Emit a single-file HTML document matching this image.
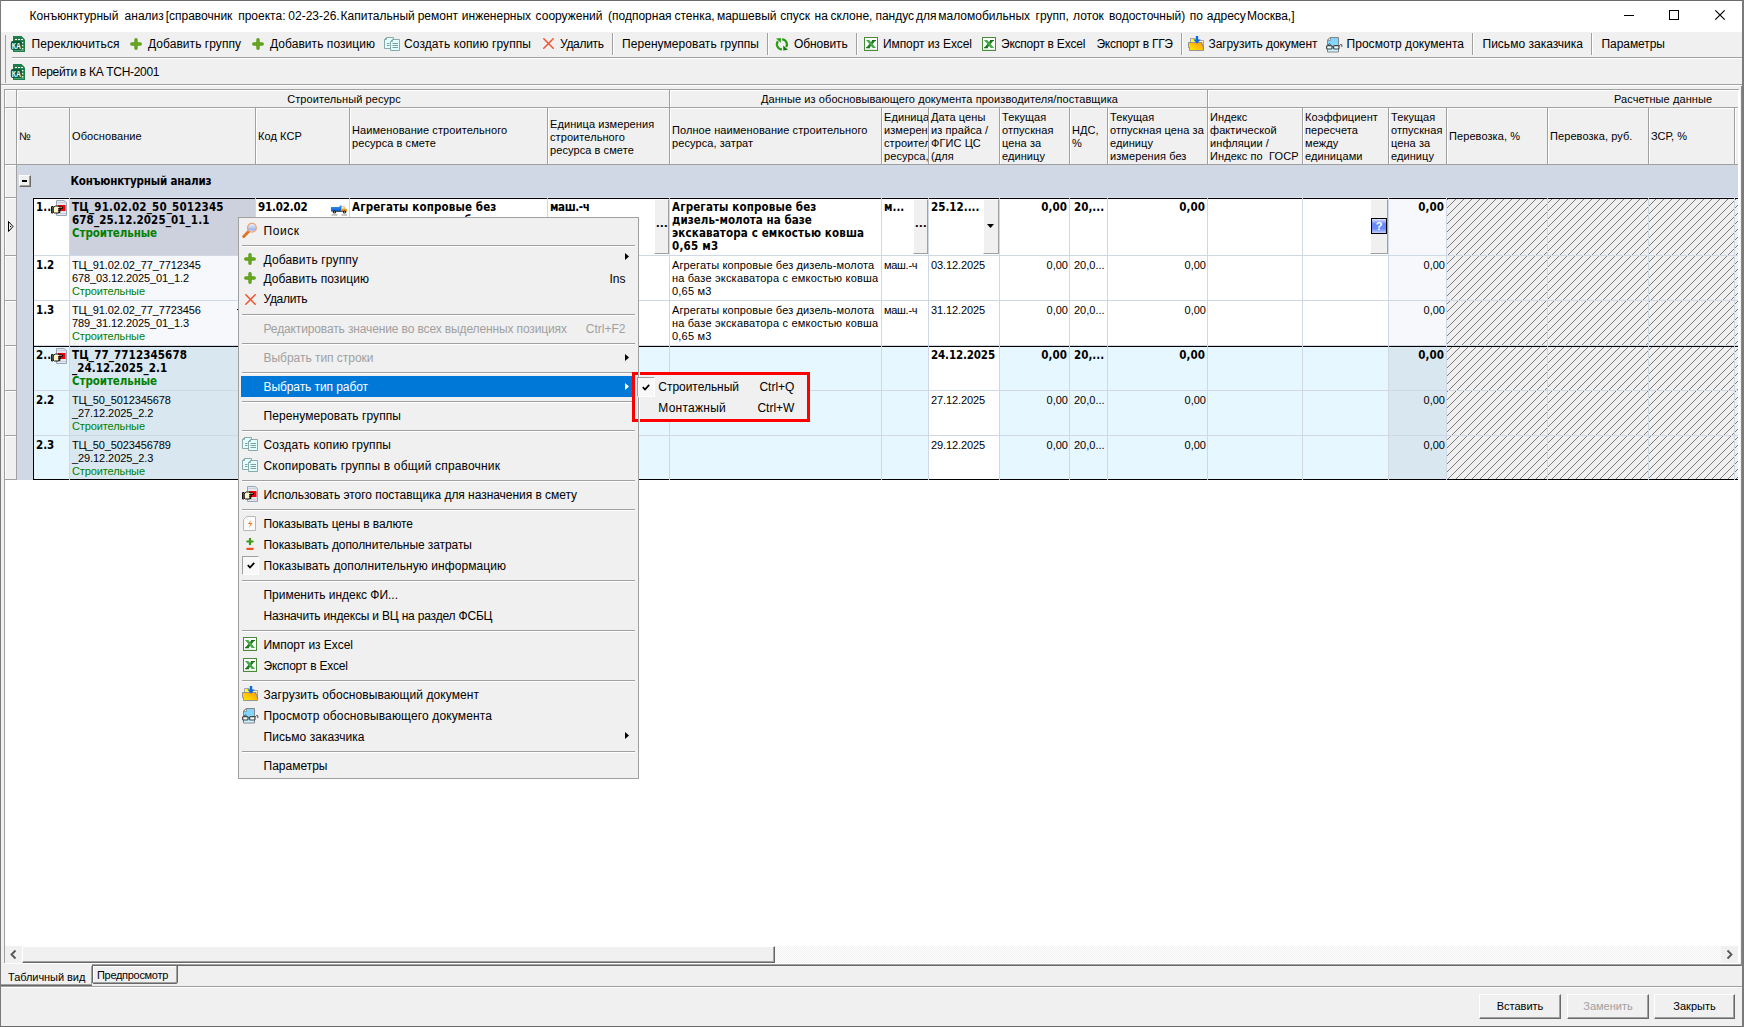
<!DOCTYPE html><html lang="ru"><head><meta charset="utf-8"><title>Конъюнктурный анализ</title><style>
*{box-sizing:border-box;margin:0;padding:0}
html,body{width:1744px;height:1027px;overflow:hidden;background:#f0f0f0}
body{position:relative;font-family:"Liberation Sans",sans-serif;font-size:11px;color:#000}
div,span.t,svg.i{position:absolute}
.t{white-space:nowrap;line-height:20px;margin-top:-14px}
.u{font-size:12px}           /* Segoe UI replacement */
.g{color:#a0a0a0}
.th{font-size:11px}
.hc{background:#f0f0f0;border-right:1px solid #a0a0a0;border-bottom:1px solid #a0a0a0;box-shadow:inset 1px 1px 0 #fff;overflow:hidden;font-size:11px;line-height:13px;display:flex;align-items:center;padding-left:2px;white-space:nowrap;letter-spacing:0.080px}
.c{border-right:1px solid #d0d7e5;border-bottom:1px solid #d0d7e5;overflow:hidden;font-size:11px;line-height:13px;padding:3px 0 0 2px;white-space:nowrap}
.b{font-weight:bold;font-family:"DejaVu Sans Condensed","Liberation Sans",sans-serif;font-size:11.5px}
.r{text-align:right;padding-right:1px}
.r.b{padding-right:2px}
.gr{color:#008000}
.btn{background:#f0f0f0;border:1px solid;border-color:#fff #696969 #696969 #fff;box-shadow:inset -1px -1px 0 #a0a0a0;text-align:center;font-size:11px}
.sep{background:#a0a0a0;width:1px;height:22px;box-shadow:1px 0 0 #fff}
.ms{background:#a0a0a0;height:1px;border:0}
</style></head><body>
<div style="left:0px;top:0px;width:1744px;height:32px;background:#fff"></div>
<span id="t1" class="t u" style="left:29.5px;top:20px;white-space:pre;">Конъюнктурный </span>
<span id="t2" class="t u" style="left:124.6px;top:20px;white-space:pre;">анализ </span>
<span id="t3" class="t u" style="left:165.7px;top:20px;white-space:pre;">[справочник </span>
<span id="t4" class="t u" style="left:238.2px;top:20px;white-space:pre;">проекта: </span>
<span id="t5" class="t u" style="left:288.3px;top:20px;white-space:pre;">02-23-26. </span>
<span id="t6" class="t u" style="left:340.6px;top:20px;white-space:pre;">Капитальный </span>
<span id="t7" class="t u" style="left:417.7px;top:20px;white-space:pre;">ремонт </span>
<span id="t8" class="t u" style="left:461.8px;top:20px;white-space:pre;">инженерных </span>
<span id="t9" class="t u" style="left:535.6px;top:20px;white-space:pre;">сооружений </span>
<span id="t10" class="t u" style="left:608px;top:20px;white-space:pre;">(подпорная </span>
<span id="t11" class="t u" style="left:674.5px;top:20px;white-space:pre;">стенка, </span>
<span id="t12" class="t u" style="left:716.9px;top:20px;white-space:pre;">маршевый </span>
<span id="t13" class="t u" style="left:780.3px;top:20px;white-space:pre;">спуск </span>
<span id="t14" class="t u" style="left:814.5px;top:20px;white-space:pre;">на </span>
<span id="t15" class="t u" style="left:830.6px;top:20px;white-space:pre;">склоне, </span>
<span id="t16" class="t u" style="left:875.4px;top:20px;white-space:pre;">пандус </span>
<span id="t17" class="t u" style="left:916.1px;top:20px;white-space:pre;">для </span>
<span id="t18" class="t u" style="left:938.3px;top:20px;white-space:pre;">маломобильных </span>
<span id="t19" class="t u" style="left:1035.5px;top:20px;white-space:pre;">групп, </span>
<span id="t20" class="t u" style="left:1073px;top:20px;white-space:pre;">лоток </span>
<span id="t21" class="t u" style="left:1109px;top:20px;white-space:pre;">водосточный) </span>
<span id="t22" class="t u" style="left:1189.8px;top:20px;white-space:pre;">по </span>
<span id="t23" class="t u" style="left:1206.8px;top:20px;white-space:pre;">адресу </span>
<span id="t24" class="t u" style="left:1246.9px;top:20px;white-space:pre;">Москва,]</span>
<svg class="i" style="left:1600px;top:1px" width="140" height="30" viewBox="0 0 140 30"><path d="M24 14.500h10" stroke="#000" fill="none"/><rect x="69.500" y="9.500" width="9" height="9" stroke="#000" fill="none"/><path d="M115.300 9.300l9.400 9.400M124.700 9.300l-9.400 9.400" stroke="#000" stroke-width="1.200" fill="none"/></svg>
<div style="left:0px;top:32px;width:1744px;height:53px;background:#f0f0f0"></div>
<div style="left:5px;top:35px;width:1px;height:48px;background:#a0a0a0"></div>
<div style="left:12px;top:57px;width:1730px;height:1px;background:#a0a0a0"></div>
<div style="left:12px;top:58px;width:1730px;height:1px;background:#fff"></div>
<div style="left:1px;top:84px;width:1741px;height:1px;background:#a0a0a0"></div>
<div style="left:1px;top:85px;width:1741px;height:1px;background:#fff"></div>
<svg class="i" style="left:10px;top:36px" width="15" height="16" viewBox="0 0 15 16"><path d="M3 0h8.500l3.500 3.500v12.500h-12z" fill="#1f7d49"/><path d="M4 13.500h10v1.500h-10z" fill="#4fa373"/><rect x="0.800" y="5" width="10.700" height="9" rx="2" fill="#0d5c31"/><path d="M5 3.500h2M8 3.500h2M11 3.500h2" stroke="#fff"/><path d="M12 6h1.300v1.300h-1.300zM12 9h1.300v1.300h-1.300zM12 12h1.300v1.300h-1.300z" fill="#fff"/><text x="1.800" y="12.800" font-family="Liberation Sans, sans-serif" font-size="8.500" font-weight="bold" fill="#fff" textLength="9.200" lengthAdjust="spacingAndGlyphs">КА</text></svg>
<span id="t25" class="t u" style="left:31.5px;top:48px;letter-spacing:0.085px;">Переключиться</span>
<svg class="i" style="left:130px;top:38px" width="12" height="12" viewBox="0 0 12 12"><path d="M6 1.800v8.400M1.800 6h8.400" stroke="#5b9a17" stroke-width="3.400" stroke-linecap="round"/><path d="M6 2v8M2 6h8" stroke="#6aa822" stroke-width="1.600" stroke-linecap="round"/></svg>
<span id="t26" class="t u" style="left:148px;top:48px;letter-spacing:0.051px;">Добавить группу</span>
<svg class="i" style="left:252px;top:38px" width="12" height="12" viewBox="0 0 12 12"><path d="M6 1.800v8.400M1.800 6h8.400" stroke="#5b9a17" stroke-width="3.400" stroke-linecap="round"/><path d="M6 2v8M2 6h8" stroke="#6aa822" stroke-width="1.600" stroke-linecap="round"/></svg>
<span id="t27" class="t u" style="left:270px;top:48px;letter-spacing:0.054px;">Добавить позицию</span>
<svg class="i" style="left:384px;top:37px" width="16" height="14" viewBox="0 0 16 14"><path d="M2.500 0.500h7v11h-9v-9z" fill="#e0ffff" stroke="#8aa9a9"/><path d="M0.500 2.500h2v-2" fill="none" stroke="#8aa9a9"/><path d="M8.500 2.500h7v11h-9v-9z" fill="#e0ffff" stroke="#8aa9a9"/><path d="M6.500 4.500h2v-2" fill="none" stroke="#8aa9a9"/><path d="M3 6.500h2.500M3 8.500h2.500M8.500 6.500h5.500M8.500 8.500h5.500M8.500 10.500h5.500" stroke="#7d9e9e"/></svg>
<span id="t28" class="t u" style="left:404px;top:48px;letter-spacing:0.101px;">Создать копию группы</span>
<svg class="i" style="left:543px;top:38px" width="11" height="11" viewBox="0 0 11 11"><path d="M0.800 0.800l9.400 9.400M10.200 0.800l-9.400 9.400" stroke="#f0532b" stroke-width="1.500" stroke-linecap="round"/></svg>
<span id="t29" class="t u" style="left:560px;top:48px;letter-spacing:-0.305px;">Удалить</span>
<div class="sep" style="left:612px;top:33px;width:1px;height:22px;"></div>
<span id="t30" class="t u" style="left:622px;top:48px;letter-spacing:0.066px;">Перенумеровать группы</span>
<div class="sep" style="left:767px;top:33px;width:1px;height:22px;"></div>
<svg class="i" style="left:775px;top:37.5px" width="14" height="13" viewBox="0 0 14 13"><path d="M7 11.300A5 5 0 0 1 3 3.200" fill="none" stroke="#2c9e14" stroke-width="2.200"/><path d="M1 0.600l5-0.600-0.200 4.800z" fill="#2ea516"/><path d="M7.200 1.400A5 5 0 0 1 11.200 9" fill="none" stroke="#259512" stroke-width="2.200"/><path d="M8.200 7.500l0.100 4.900 4.700-0.600z" fill="#0d7a0a"/></svg>
<span id="t31" class="t u" style="left:794px;top:48px;letter-spacing:-0.078px;">Обновить</span>
<div class="sep" style="left:856px;top:33px;width:1px;height:22px;"></div>
<svg class="i" style="left:864px;top:37px" width="14" height="14" viewBox="0 0 14 14"><rect x="0.500" y="0.500" width="13" height="13" fill="#fbfefb" stroke="#4a8a3a"/><path d="M1.500 12.500h11" stroke="#dff0df"/><path d="M12 3h-3.300l-6.700 8h3.300z" fill="#1c7d22"/><path d="M2 3h3.300l6.700 8h-3.300z" fill="#4aa84a"/><path d="M2 10.300h4v0.900h-4zM8 3h4v0.900h-4z" fill="#19701c"/></svg>
<span id="t32" class="t u" style="left:883px;top:48px;letter-spacing:-0.084px;">Импорт из Excel</span>
<svg class="i" style="left:982px;top:37px" width="14" height="14" viewBox="0 0 14 14"><rect x="0.500" y="0.500" width="13" height="13" fill="#fbfefb" stroke="#4a8a3a"/><path d="M1.500 12.500h11" stroke="#dff0df"/><path d="M12 3h-3.300l-6.700 8h3.300z" fill="#1c7d22"/><path d="M2 3h3.300l6.700 8h-3.300z" fill="#4aa84a"/><path d="M2 10.300h4v0.900h-4zM8 3h4v0.900h-4z" fill="#19701c"/></svg>
<span id="t33" class="t u" style="left:1001px;top:48px;letter-spacing:-0.227px;">Экспорт в Excel</span>
<span id="t34" class="t u" style="left:1096.5px;top:48px;letter-spacing:-0.272px;">Экспорт в ГГЭ</span>
<div class="sep" style="left:1181px;top:33px;width:1px;height:22px;"></div>
<svg class="i" style="left:1188px;top:36px" width="16" height="15" viewBox="0 0 16 15"><defs><linearGradient id="fg9" x1="0" y1="1" x2="1" y2="0"><stop offset="0" stop-color="#ffee00"/><stop offset="1" stop-color="#ff9800"/></linearGradient></defs><path d="M2.500 2.500h4.500v2h8.500v9h-13z" fill="#fff9b0" stroke="#8f8fa5" stroke-width="0.800"/><rect x="3" y="3" width="3.500" height="2.500" fill="#ffff00"/><path d="M0.500 6.500h13.500v2h0.800v2.500h0.700v3.500h-14v-3h-1z" fill="url(#fg9)" stroke="#7f7f95" stroke-width="0.800"/><rect x="7.800" y="0" width="2.400" height="5" fill="#0a6ae0"/><path d="M5.300 3.500h7.400l-3.700 4.200z" fill="#0a6ae0"/></svg>
<span id="t35" class="t u" style="left:1208.5px;top:48px;letter-spacing:-0.065px;">Загрузить документ</span>
<svg class="i" style="left:1326px;top:36.5px" width="17" height="16" viewBox="0 0 17 16"><defs><linearGradient id="vg10" x1="0" y1="0" x2="0" y2="1"><stop offset="0" stop-color="#7fd3ff"/><stop offset="0.550" stop-color="#86d8ff"/><stop offset="1" stop-color="#e0fbff"/></linearGradient></defs><path d="M4 0.500h8.500v14.500h-11v-12z" fill="url(#vg10)" stroke="#858585"/><path d="M1.500 3.500h3v-3z" fill="#d8ffff" stroke="#858585" stroke-width="0.800"/><rect x="0.600" y="8.600" width="5.400" height="3.400" rx="1" fill="#e8ffff" stroke="#454545" stroke-width="1.200"/><rect x="7.600" y="8.600" width="5.400" height="3.400" rx="1" fill="#e8ffff" stroke="#454545" stroke-width="1.200"/><path d="M6 9.500h1.600M13 9.200l1.400-1.600h1.400v2.400M2 8.200l1.600-1.600 1 1.600" fill="none" stroke="#555" stroke-width="1"/></svg>
<span id="t36" class="t u" style="left:1346.5px;top:48px;letter-spacing:0.050px;">Просмотр документа</span>
<div class="sep" style="left:1472px;top:33px;width:1px;height:22px;"></div>
<span id="t37" class="t u" style="left:1482.5px;top:48px;letter-spacing:0.013px;">Письмо заказчика</span>
<div class="sep" style="left:1591px;top:33px;width:1px;height:22px;"></div>
<span id="t38" class="t u" style="left:1601.5px;top:48px;letter-spacing:-0.059px;">Параметры</span>
<svg class="i" style="left:10px;top:64px" width="15" height="16" viewBox="0 0 15 16"><path d="M3 0h8.500l3.500 3.500v12.500h-12z" fill="#1f7d49"/><path d="M4 13.500h10v1.500h-10z" fill="#4fa373"/><rect x="0.800" y="5" width="10.700" height="9" rx="2" fill="#0d5c31"/><path d="M5 3.500h2M8 3.500h2M11 3.500h2" stroke="#fff"/><path d="M12 6h1.300v1.300h-1.300zM12 9h1.300v1.300h-1.300zM12 12h1.300v1.300h-1.300z" fill="#fff"/><text x="1.800" y="12.800" font-family="Liberation Sans, sans-serif" font-size="8.500" font-weight="bold" fill="#fff" textLength="9.200" lengthAdjust="spacingAndGlyphs">КА</text></svg>
<span id="t39" class="t u" style="left:31.5px;top:76px;letter-spacing:-0.314px;">Перейти в КА ТСН-2001</span>
<div style="left:4px;top:89px;width:1736px;height:874px;background:#fff;border-top:1px solid #a0a0a0;border-left:1px solid #a0a0a0;border-right:2px solid #fff"></div>
<div class="hc" style="left:5px;top:90px;width:12px;height:18px;"></div>
<div class="hc" style="left:17px;top:90px;width:653px;height:18px;justify-content:center;padding-top:2px;"><span>Строительный ресурс</span></div>
<div class="hc" style="left:670px;top:90px;width:538px;height:18px;justify-content:center;padding-top:2px;"><span>Данные из обосновывающего документа производителя/поставщика</span></div>
<div class="hc" style="left:1208px;top:90px;width:530px;height:18px;border-right:0;"><span style="position:absolute;left:406px;top:3px">Расчетные данные</span></div>
<div class="hc" style="left:5px;top:108px;width:12px;height:57px;"></div>
<div class="hc" style="left:17px;top:108px;width:53px;height:57px;"><span>№</span></div>
<div class="hc" style="left:70px;top:108px;width:186px;height:57px;"><span>Обоснование</span></div>
<div class="hc" style="left:256px;top:108px;width:94px;height:57px;"><span>Код КСР</span></div>
<div class="hc" style="left:350px;top:108px;width:198px;height:57px;padding-top:2px;"><span>Наименование строительного<br>ресурса в смете</span></div>
<div class="hc" style="left:548px;top:108px;width:122px;height:57px;padding-top:2px;"><span>Единица измерения<br>строительного<br>ресурса в смете</span></div>
<div class="hc" style="left:670px;top:108px;width:212px;height:57px;padding-top:2px;"><span>Полное наименование строительного<br>ресурса, затрат</span></div>
<div class="hc" style="left:882px;top:108px;width:47px;height:57px;padding-top:2px;"><span>Единица<br>измерения<br>строительного<br>ресурса,</span></div>
<div class="hc" style="left:929px;top:108px;width:71px;height:57px;padding-top:2px;"><span>Дата цены<br>из прайса /<br>ФГИС ЦС<br>(для</span></div>
<div class="hc" style="left:1000px;top:108px;width:70px;height:57px;padding-top:2px;"><span>Текущая<br>отпускная<br>цена за<br>единицу</span></div>
<div class="hc" style="left:1070px;top:108px;width:38px;height:57px;padding-top:2px;"><span>НДС,<br>%</span></div>
<div class="hc" style="left:1108px;top:108px;width:100px;height:57px;padding-top:2px;"><span>Текущая<br>отпускная цена за<br>единицу<br>измерения без</span></div>
<div class="hc" style="left:1208px;top:108px;width:95px;height:57px;padding-top:2px;"><span>Индекс<br>фактической<br>инфляции /<br>Индекс по&nbsp; ГОСР</span></div>
<div class="hc" style="left:1303px;top:108px;width:86px;height:57px;padding-top:2px;"><span>Коэффициент<br>пересчета<br>между<br>единицами</span></div>
<div class="hc" style="left:1389px;top:108px;width:58px;height:57px;padding-top:2px;"><span>Текущая<br>отпускная<br>цена за<br>единицу</span></div>
<div class="hc" style="left:1447px;top:108px;width:101px;height:57px;"><span>Перевозка, %</span></div>
<div class="hc" style="left:1548px;top:108px;width:101px;height:57px;"><span>Перевозка, руб.</span></div>
<div class="hc" style="left:1649px;top:108px;width:86px;height:57px;"><span>ЗСР, %</span></div>
<div class="hc" style="left:1735px;top:108px;width:3px;height:57px;border-right:0;"></div>
<div class="hc" style="left:5px;top:165px;width:12px;height:33px;"></div>
<div style="left:17px;top:165px;width:1721px;height:33px;background:#d0d7e5"></div>
<div style="left:19px;top:175px;width:12px;height:12px;background:#f0f0f0;border:1px solid;border-color:#fff #696969 #696969 #fff;box-shadow:inset -1px -1px 0 #a0a0a0"></div>
<div style="left:22px;top:180px;width:5px;height:2px;background:#000"></div>
<span id="t40" class="t th b" style="left:70.5px;top:185px;letter-spacing:-0.162px;">Конъюнктурный анализ</span>
<div style="left:17px;top:198px;width:16px;height:282px;background:#d0d7e5"></div>
<div class="hc" style="left:5px;top:198px;width:12px;height:58px;"></div>
<div class="hc" style="left:5px;top:256px;width:12px;height:45px;"></div>
<div class="hc" style="left:5px;top:301px;width:12px;height:45px;"></div>
<div class="hc" style="left:5px;top:346px;width:12px;height:45px;"></div>
<div class="hc" style="left:5px;top:391px;width:12px;height:45px;"></div>
<div class="hc" style="left:5px;top:436px;width:12px;height:44px;"></div>
<svg class="i" style="left:8px;top:221px" width="6" height="11" viewBox="0 0 6 11"><path d="M0.5 0.5l4.500 5-4.500 5z" fill="none" stroke="#000"/><path d="M2 5.500h1" stroke="#000"/></svg>
<div class="c b" style="left:34px;top:199px;width:36px;height:57px;background:#fff;padding-top:2px;"><span id="t41">1...</span></div>
<div class="c b" style="left:70px;top:199px;width:186px;height:57px;background:#cdd1de;padding-top:2px;"><span id="t42" style="letter-spacing:0.165px">ТЦ_91.02.02_50_5012345</span><br><span id="t43" style="letter-spacing:0.105px">678_25.12.2025_01_1.1</span><br><span id="t44" class="gr" style="letter-spacing:-0.092px">Строительные</span></div>
<div class="c b" style="left:256px;top:199px;width:94px;height:57px;background:#fff;padding-top:2px;"><span id="t45" style="letter-spacing:-0.188px">91.02.02</span></div>
<div class="c b" style="left:350px;top:199px;width:198px;height:57px;background:#fff;padding-top:2px;"><span id="t46" style="letter-spacing:0.127px">Агрегаты копровые без</span><br><span id="t47" style="letter-spacing:0.047px">дизель-молота на базе</span><br><span id="t48" style="letter-spacing:0.143px">экскаватора с емкостью ковша</span><br><span id="t49" style="letter-spacing:0.242px">0,65 м3</span></div>
<div class="c b" style="left:548px;top:199px;width:122px;height:57px;background:#fff;padding-top:2px;"><span id="t50" style="letter-spacing:-0.403px">маш.-ч</span></div>
<div class="c b" style="left:670px;top:199px;width:212px;height:57px;background:#fff;padding-top:2px;"><span id="t51" style="letter-spacing:0.127px">Агрегаты копровые без</span><br><span id="t52" style="letter-spacing:0.047px">дизель-молота на базе</span><br><span id="t53" style="letter-spacing:0.143px">экскаватора с емкостью ковша</span><br><span id="t54" style="letter-spacing:0.242px">0,65 м3</span></div>
<div class="c b" style="left:882px;top:199px;width:47px;height:57px;background:#fff;padding-top:2px;">м...</div>
<div class="c b" style="left:929px;top:199px;width:71px;height:57px;background:#fff;padding-top:2px;">25.12....</div>
<div class="c b r" style="left:1000px;top:199px;width:70px;height:57px;background:#fff;padding-top:2px;"><span id="t55" style="letter-spacing:0.056px">0,00</span></div>
<div class="c b" style="left:1070px;top:199px;width:38px;height:57px;background:#fff;padding-left:4px;padding-top:2px;">20,...</div>
<div class="c b r" style="left:1108px;top:199px;width:100px;height:57px;background:#fff;padding-top:2px;"><span id="t56" style="letter-spacing:0.056px">0,00</span></div>
<div class="c " style="left:1208px;top:199px;width:95px;height:57px;background:#fff;padding-top:2px;"></div>
<div class="c " style="left:1303px;top:199px;width:86px;height:57px;background:#fff;padding-top:2px;"></div>
<div class="c b r" style="left:1389px;top:199px;width:58px;height:57px;background:#f7f8fb;padding-top:2px;"><span id="t57" style="letter-spacing:0.056px">0,00</span></div>
<div class="c b" style="left:34px;top:256px;width:36px;height:45px;background:#fff;"><span id="t58" style="letter-spacing:-0.039px">1.2</span></div>
<div class="c " style="left:70px;top:256px;width:186px;height:45px;background:#f7f8fb;"><span id="t59" style="letter-spacing:-0.100px">ТЦ_91.02.02_77_7712345</span><br><span id="t60" style="letter-spacing:-0.110px">678_03.12.2025_01_1.2</span><br><span id="t61" class="gr" style="letter-spacing:-0.116px">Строительные</span></div>
<div class="c " style="left:256px;top:256px;width:94px;height:45px;background:#fff;">91.02.02</div>
<div class="c " style="left:350px;top:256px;width:198px;height:45px;background:#fff;"><span id="t62" style="letter-spacing:0.135px">Агрегаты копровые без дизель-молота</span><br><span id="t63" style="letter-spacing:0.199px">на базе экскаватора с емкостью ковша</span><br><span id="t64" style="letter-spacing:0.207px">0,65 м3</span></div>
<div class="c " style="left:548px;top:256px;width:122px;height:45px;background:#fff;"><span id="t65" style="letter-spacing:-0.294px">маш.-ч</span></div>
<div class="c " style="left:670px;top:256px;width:212px;height:45px;background:#fff;"><span id="t66" style="letter-spacing:0.135px">Агрегаты копровые без дизель-молота</span><br><span id="t67" style="letter-spacing:0.199px">на базе экскаватора с емкостью ковша</span><br><span id="t68" style="letter-spacing:0.207px">0,65 м3</span></div>
<div class="c " style="left:882px;top:256px;width:47px;height:45px;background:#fff;"><span id="t69" style="letter-spacing:-0.294px">маш.-ч</span></div>
<div class="c " style="left:929px;top:256px;width:71px;height:45px;background:#fff;"><span id="t70" style="letter-spacing:-0.096px">03.12.2025</span></div>
<div class="c  r" style="left:1000px;top:256px;width:70px;height:45px;background:#fff;"><span id="t71" style="letter-spacing:0.026px">0,00</span></div>
<div class="c " style="left:1070px;top:256px;width:38px;height:45px;background:#fff;padding-left:4px;">20,0...</div>
<div class="c  r" style="left:1108px;top:256px;width:100px;height:45px;background:#fff;"><span id="t72" style="letter-spacing:0.026px">0,00</span></div>
<div class="c " style="left:1208px;top:256px;width:95px;height:45px;background:#fff;"></div>
<div class="c " style="left:1303px;top:256px;width:86px;height:45px;background:#fff;"></div>
<div class="c  r" style="left:1389px;top:256px;width:58px;height:45px;background:#f7f8fb;"><span id="t73" style="letter-spacing:0.026px">0,00</span></div>
<div class="c b" style="left:34px;top:301px;width:36px;height:45px;background:#fff;"><span id="t74" style="letter-spacing:-0.039px">1.3</span></div>
<div class="c " style="left:70px;top:301px;width:186px;height:45px;background:#f7f8fb;"><span id="t75" style="letter-spacing:-0.100px">ТЦ_91.02.02_77_7723456</span><br><span id="t76" style="letter-spacing:-0.110px">789_31.12.2025_01_1.3</span><br><span id="t77" class="gr" style="letter-spacing:-0.116px">Строительные</span></div>
<div class="c " style="left:256px;top:301px;width:94px;height:45px;background:#fff;">91.02.02</div>
<div class="c " style="left:350px;top:301px;width:198px;height:45px;background:#fff;"><span id="t78" style="letter-spacing:0.135px">Агрегаты копровые без дизель-молота</span><br><span id="t79" style="letter-spacing:0.199px">на базе экскаватора с емкостью ковша</span><br><span id="t80" style="letter-spacing:0.207px">0,65 м3</span></div>
<div class="c " style="left:548px;top:301px;width:122px;height:45px;background:#fff;"><span id="t81" style="letter-spacing:-0.294px">маш.-ч</span></div>
<div class="c " style="left:670px;top:301px;width:212px;height:45px;background:#fff;"><span id="t82" style="letter-spacing:0.135px">Агрегаты копровые без дизель-молота</span><br><span id="t83" style="letter-spacing:0.199px">на базе экскаватора с емкостью ковша</span><br><span id="t84" style="letter-spacing:0.207px">0,65 м3</span></div>
<div class="c " style="left:882px;top:301px;width:47px;height:45px;background:#fff;"><span id="t85" style="letter-spacing:-0.294px">маш.-ч</span></div>
<div class="c " style="left:929px;top:301px;width:71px;height:45px;background:#fff;"><span id="t86" style="letter-spacing:-0.096px">31.12.2025</span></div>
<div class="c  r" style="left:1000px;top:301px;width:70px;height:45px;background:#fff;"><span id="t87" style="letter-spacing:0.026px">0,00</span></div>
<div class="c " style="left:1070px;top:301px;width:38px;height:45px;background:#fff;padding-left:4px;">20,0...</div>
<div class="c  r" style="left:1108px;top:301px;width:100px;height:45px;background:#fff;"><span id="t88" style="letter-spacing:0.026px">0,00</span></div>
<div class="c " style="left:1208px;top:301px;width:95px;height:45px;background:#fff;"></div>
<div class="c " style="left:1303px;top:301px;width:86px;height:45px;background:#fff;"></div>
<div class="c  r" style="left:1389px;top:301px;width:58px;height:45px;background:#f7f8fb;"><span id="t89" style="letter-spacing:0.026px">0,00</span></div>
<div class="c b" style="left:34px;top:347px;width:36px;height:44px;background:#e6f7ff;padding-top:2px;"><span id="t90">2...</span></div>
<div class="c b" style="left:70px;top:347px;width:186px;height:44px;background:#d9e8f0;padding-top:2px;"><span id="t91" style="letter-spacing:0.101px">ТЦ_77_7712345678</span><br><span id="t92" style="letter-spacing:0.070px">_24.12.2025_2.1</span><br><span id="t93" class="gr" style="letter-spacing:-0.092px">Строительные</span></div>
<div class="c b" style="left:256px;top:347px;width:94px;height:44px;background:#e6f7ff;padding-top:2px;"></div>
<div class="c b" style="left:350px;top:347px;width:198px;height:44px;background:#e6f7ff;padding-top:2px;"></div>
<div class="c b" style="left:548px;top:347px;width:122px;height:44px;background:#e6f7ff;padding-top:2px;"></div>
<div class="c b" style="left:670px;top:347px;width:212px;height:44px;background:#e6f7ff;padding-top:2px;"></div>
<div class="c b" style="left:882px;top:347px;width:47px;height:44px;background:#e6f7ff;padding-top:2px;"></div>
<div class="c b" style="left:929px;top:347px;width:71px;height:44px;background:#fff;padding-top:2px;"><span id="t94" style="letter-spacing:-0.150px">24.12.2025</span></div>
<div class="c b r" style="left:1000px;top:347px;width:70px;height:44px;background:#e6f7ff;padding-top:2px;"><span id="t95" style="letter-spacing:0.056px">0,00</span></div>
<div class="c b" style="left:1070px;top:347px;width:38px;height:44px;background:#e6f7ff;padding-left:4px;padding-top:2px;">20,...</div>
<div class="c b r" style="left:1108px;top:347px;width:100px;height:44px;background:#e6f7ff;padding-top:2px;"><span id="t96" style="letter-spacing:0.056px">0,00</span></div>
<div class="c " style="left:1208px;top:347px;width:95px;height:44px;background:#e6f7ff;padding-top:2px;"></div>
<div class="c " style="left:1303px;top:347px;width:86px;height:44px;background:#e6f7ff;padding-top:2px;"></div>
<div class="c b r" style="left:1389px;top:347px;width:58px;height:44px;background:#d9e8f0;padding-top:2px;"><span id="t97" style="letter-spacing:0.056px">0,00</span></div>
<div class="c b" style="left:34px;top:391px;width:36px;height:45px;background:#e6f7ff;"><span id="t98" style="letter-spacing:-0.039px">2.2</span></div>
<div class="c " style="left:70px;top:391px;width:186px;height:45px;background:#d9e8f0;"><span id="t99" style="letter-spacing:-0.101px">ТЦ_50_5012345678</span><br><span id="t100" style="letter-spacing:-0.085px">_27.12.2025_2.2</span><br><span id="t101" class="gr" style="letter-spacing:-0.116px">Строительные</span></div>
<div class="c " style="left:256px;top:391px;width:94px;height:45px;background:#e6f7ff;"></div>
<div class="c " style="left:350px;top:391px;width:198px;height:45px;background:#e6f7ff;"></div>
<div class="c " style="left:548px;top:391px;width:122px;height:45px;background:#e6f7ff;"></div>
<div class="c " style="left:670px;top:391px;width:212px;height:45px;background:#e6f7ff;"></div>
<div class="c " style="left:882px;top:391px;width:47px;height:45px;background:#e6f7ff;"></div>
<div class="c " style="left:929px;top:391px;width:71px;height:45px;background:#fff;"><span id="t102" style="letter-spacing:-0.096px">27.12.2025</span></div>
<div class="c  r" style="left:1000px;top:391px;width:70px;height:45px;background:#e6f7ff;"><span id="t103" style="letter-spacing:0.026px">0,00</span></div>
<div class="c " style="left:1070px;top:391px;width:38px;height:45px;background:#e6f7ff;padding-left:4px;">20,0...</div>
<div class="c  r" style="left:1108px;top:391px;width:100px;height:45px;background:#e6f7ff;"><span id="t104" style="letter-spacing:0.026px">0,00</span></div>
<div class="c " style="left:1208px;top:391px;width:95px;height:45px;background:#e6f7ff;"></div>
<div class="c " style="left:1303px;top:391px;width:86px;height:45px;background:#e6f7ff;"></div>
<div class="c  r" style="left:1389px;top:391px;width:58px;height:45px;background:#d9e8f0;"><span id="t105" style="letter-spacing:0.026px">0,00</span></div>
<div class="c b" style="left:34px;top:436px;width:36px;height:44px;background:#e6f7ff;"><span id="t106" style="letter-spacing:-0.039px">2.3</span></div>
<div class="c " style="left:70px;top:436px;width:186px;height:44px;background:#d9e8f0;"><span id="t107" style="letter-spacing:-0.101px">ТЦ_50_5023456789</span><br><span id="t108" style="letter-spacing:-0.085px">_29.12.2025_2.3</span><br><span id="t109" class="gr" style="letter-spacing:-0.116px">Строительные</span></div>
<div class="c " style="left:256px;top:436px;width:94px;height:44px;background:#e6f7ff;"></div>
<div class="c " style="left:350px;top:436px;width:198px;height:44px;background:#e6f7ff;"></div>
<div class="c " style="left:548px;top:436px;width:122px;height:44px;background:#e6f7ff;"></div>
<div class="c " style="left:670px;top:436px;width:212px;height:44px;background:#e6f7ff;"></div>
<div class="c " style="left:882px;top:436px;width:47px;height:44px;background:#e6f7ff;"></div>
<div class="c " style="left:929px;top:436px;width:71px;height:44px;background:#fff;"><span id="t110" style="letter-spacing:-0.096px">29.12.2025</span></div>
<div class="c  r" style="left:1000px;top:436px;width:70px;height:44px;background:#e6f7ff;"><span id="t111" style="letter-spacing:0.026px">0,00</span></div>
<div class="c " style="left:1070px;top:436px;width:38px;height:44px;background:#e6f7ff;padding-left:4px;">20,0...</div>
<div class="c  r" style="left:1108px;top:436px;width:100px;height:44px;background:#e6f7ff;"><span id="t112" style="letter-spacing:0.026px">0,00</span></div>
<div class="c " style="left:1208px;top:436px;width:95px;height:44px;background:#e6f7ff;"></div>
<div class="c " style="left:1303px;top:436px;width:86px;height:44px;background:#e6f7ff;"></div>
<div class="c  r" style="left:1389px;top:436px;width:58px;height:44px;background:#d9e8f0;"><span id="t113" style="letter-spacing:0.026px">0,00</span></div>
<svg class="i" style="left:1447px;top:199px" width="291" height="280" viewBox="1447 199 291 280" shape-rendering="crispEdges"><defs><pattern id="hp" width="8" height="8" patternUnits="userSpaceOnUse"><rect x="6" y="0" width="1" height="1" fill="#7a7a7a"/><rect x="5" y="1" width="1" height="1" fill="#7a7a7a"/><rect x="4" y="2" width="1" height="1" fill="#7a7a7a"/><rect x="3" y="3" width="1" height="1" fill="#7a7a7a"/><rect x="2" y="4" width="1" height="1" fill="#7a7a7a"/><rect x="1" y="5" width="1" height="1" fill="#7a7a7a"/><rect x="0" y="6" width="1" height="1" fill="#7a7a7a"/><rect x="7" y="7" width="1" height="1" fill="#7a7a7a"/></pattern></defs><rect x="1447" y="199" width="291" height="280" fill="#f0f0f0"/><rect x="1447" y="199" width="291" height="280" fill="url(#hp)"/><rect x="1547" y="199" width="1" height="280" fill="#d0d7e5"/><rect x="1648" y="199" width="1" height="280" fill="#d0d7e5"/><rect x="1734" y="199" width="1" height="280" fill="#d0d7e5"/><rect x="1447" y="255" width="291" height="1" fill="#d0d7e5"/><rect x="1447" y="300" width="291" height="1" fill="#d0d7e5"/><rect x="1447" y="345" width="291" height="1" fill="#d0d7e5"/><rect x="1447" y="390" width="291" height="1" fill="#d0d7e5"/><rect x="1447" y="435" width="291" height="1" fill="#d0d7e5"/></svg>
<div style="left:33px;top:198px;width:1705px;height:1px;background:#000"></div>
<div style="left:34px;top:346px;width:1704px;height:1px;background:#000"></div>
<div style="left:33px;top:479px;width:1705px;height:1px;background:#000"></div>
<div style="left:33px;top:198px;width:1px;height:282px;background:#000"></div>
<div style="left:69px;top:198px;width:1px;height:1px;background:#c5cbd8"></div>
<div style="left:255px;top:198px;width:1px;height:1px;background:#c5cbd8"></div>
<div style="left:349px;top:198px;width:1px;height:1px;background:#c5cbd8"></div>
<div style="left:547px;top:198px;width:1px;height:1px;background:#c5cbd8"></div>
<div style="left:669px;top:198px;width:1px;height:1px;background:#c5cbd8"></div>
<div style="left:881px;top:198px;width:1px;height:1px;background:#c5cbd8"></div>
<div style="left:928px;top:198px;width:1px;height:1px;background:#c5cbd8"></div>
<div style="left:999px;top:198px;width:1px;height:1px;background:#c5cbd8"></div>
<div style="left:1069px;top:198px;width:1px;height:1px;background:#c5cbd8"></div>
<div style="left:1107px;top:198px;width:1px;height:1px;background:#c5cbd8"></div>
<div style="left:1207px;top:198px;width:1px;height:1px;background:#c5cbd8"></div>
<div style="left:1302px;top:198px;width:1px;height:1px;background:#c5cbd8"></div>
<div style="left:1388px;top:198px;width:1px;height:1px;background:#c5cbd8"></div>
<div style="left:1446px;top:198px;width:1px;height:1px;background:#c5cbd8"></div>
<div style="left:1547px;top:198px;width:1px;height:1px;background:#c5cbd8"></div>
<div style="left:1648px;top:198px;width:1px;height:1px;background:#c5cbd8"></div>
<div style="left:1734px;top:198px;width:1px;height:1px;background:#c5cbd8"></div>
<div style="left:69px;top:346px;width:1px;height:1px;background:#c5cbd8"></div>
<div style="left:255px;top:346px;width:1px;height:1px;background:#c5cbd8"></div>
<div style="left:349px;top:346px;width:1px;height:1px;background:#c5cbd8"></div>
<div style="left:547px;top:346px;width:1px;height:1px;background:#c5cbd8"></div>
<div style="left:669px;top:346px;width:1px;height:1px;background:#c5cbd8"></div>
<div style="left:881px;top:346px;width:1px;height:1px;background:#c5cbd8"></div>
<div style="left:928px;top:346px;width:1px;height:1px;background:#c5cbd8"></div>
<div style="left:999px;top:346px;width:1px;height:1px;background:#c5cbd8"></div>
<div style="left:1069px;top:346px;width:1px;height:1px;background:#c5cbd8"></div>
<div style="left:1107px;top:346px;width:1px;height:1px;background:#c5cbd8"></div>
<div style="left:1207px;top:346px;width:1px;height:1px;background:#c5cbd8"></div>
<div style="left:1302px;top:346px;width:1px;height:1px;background:#c5cbd8"></div>
<div style="left:1388px;top:346px;width:1px;height:1px;background:#c5cbd8"></div>
<div style="left:1446px;top:346px;width:1px;height:1px;background:#c5cbd8"></div>
<div style="left:1547px;top:346px;width:1px;height:1px;background:#c5cbd8"></div>
<div style="left:1648px;top:346px;width:1px;height:1px;background:#c5cbd8"></div>
<div style="left:1734px;top:346px;width:1px;height:1px;background:#c5cbd8"></div>
<div style="left:69px;top:479px;width:1px;height:1px;background:#c5cbd8"></div>
<div style="left:255px;top:479px;width:1px;height:1px;background:#c5cbd8"></div>
<div style="left:349px;top:479px;width:1px;height:1px;background:#c5cbd8"></div>
<div style="left:547px;top:479px;width:1px;height:1px;background:#c5cbd8"></div>
<div style="left:669px;top:479px;width:1px;height:1px;background:#c5cbd8"></div>
<div style="left:881px;top:479px;width:1px;height:1px;background:#c5cbd8"></div>
<div style="left:928px;top:479px;width:1px;height:1px;background:#c5cbd8"></div>
<div style="left:999px;top:479px;width:1px;height:1px;background:#c5cbd8"></div>
<div style="left:1069px;top:479px;width:1px;height:1px;background:#c5cbd8"></div>
<div style="left:1107px;top:479px;width:1px;height:1px;background:#c5cbd8"></div>
<div style="left:1207px;top:479px;width:1px;height:1px;background:#c5cbd8"></div>
<div style="left:1302px;top:479px;width:1px;height:1px;background:#c5cbd8"></div>
<div style="left:1388px;top:479px;width:1px;height:1px;background:#c5cbd8"></div>
<div style="left:1446px;top:479px;width:1px;height:1px;background:#c5cbd8"></div>
<div style="left:1547px;top:479px;width:1px;height:1px;background:#c5cbd8"></div>
<div style="left:1648px;top:479px;width:1px;height:1px;background:#c5cbd8"></div>
<div style="left:1734px;top:479px;width:1px;height:1px;background:#c5cbd8"></div>
<div style="left:33px;top:197px;width:1705px;height:1px;background:#dde3f0"></div>
<div style="left:237px;top:309px;width:1px;height:1px;background:#000"></div>
<svg class="i" style="left:51px;top:200px" width="16" height="16" viewBox="0 0 16 16"><path d="M5.500 0.500h7.500l2.500 2v13h-10z" fill="#e4e8ee" stroke="#9aa6b8"/><path d="M6 2.500h9M6 13.500h9" stroke="#c9d0da"/><rect x="7" y="5" width="7.500" height="6" fill="#f00008"/><path d="M0.500 6.500h1.500v6.500h-1.500zM2 7.500l2.500-1.500h3l0.500 1h3.500v1.500h-4v0.800h2v1.200h-2v0.800h1.500v1.200h-1.500v0.500h-4l-1.500-1z" fill="#fff4c8" stroke="#000" stroke-width="0.900" stroke-linejoin="round"/></svg>
<svg class="i" style="left:51px;top:348px" width="16" height="16" viewBox="0 0 16 16"><path d="M5.500 0.500h7.500l2.500 2v13h-10z" fill="#e4e8ee" stroke="#9aa6b8"/><path d="M6 2.500h9M6 13.500h9" stroke="#c9d0da"/><rect x="7" y="5" width="7.500" height="6" fill="#f00008"/><path d="M0.500 6.500h1.500v6.500h-1.500zM2 7.500l2.500-1.500h3l0.500 1h3.500v1.500h-4v0.800h2v1.200h-2v0.800h1.500v1.200h-1.500v0.500h-4l-1.500-1z" fill="#fff4c8" stroke="#000" stroke-width="0.900" stroke-linejoin="round"/></svg>
<svg class="i" style="left:331px;top:204.5px" width="17" height="11" viewBox="0 0 17 11"><defs><linearGradient id="tg" x1="0" y1="0" x2="0" y2="1"><stop offset="0" stop-color="#3b97f2"/><stop offset="1" stop-color="#0a5ccc"/></linearGradient></defs><path d="M0 2h8l1.500-1.700h1v6.200h-10.500z" fill="url(#tg)"/><path d="M10.500 1.500h2.500l1.500 2 1.500 1v2h-5.500z" fill="#f59a1e"/><path d="M11 2.300h1.800l1 1.300h-2.800z" fill="#e6ffff"/><path d="M1.500 6.300h14" stroke="#222" stroke-width="0.800"/><circle cx="3.500" cy="7" r="1.600" fill="#16161e"/><circle cx="13.500" cy="7" r="1.600" fill="#16161e"/><circle cx="3.500" cy="7" r="0.600" fill="#ffff80"/><circle cx="13.500" cy="7" r="0.600" fill="#ffff80"/><path d="M0.500 10h6M10.500 10h5.500" stroke="#666" stroke-width="0.700"/></svg>
<div class="btn" style="left:654px;top:199px;width:15px;height:55px;border-color:#fff #a0a0a0 #a0a0a0 #fff;box-shadow:none;line-height:45px;font-weight:bold;font-size:13px;letter-spacing:0.400px;text-indent:1px">...</div>
<div class="btn" style="left:913px;top:199px;width:15px;height:55px;border-color:#fff #a0a0a0 #a0a0a0 #fff;box-shadow:none;line-height:45px;font-weight:bold;font-size:13px;letter-spacing:0.400px;text-indent:1px">...</div>
<div class="btn" style="left:983px;top:199px;width:16px;height:55px;border-color:#fff #a0a0a0 #a0a0a0 #fff;box-shadow:none;line-height:45px;font-weight:bold;font-size:13px;letter-spacing:0.400px;text-indent:1px"><svg class="i" style="left:3px;top:24px" width="7" height="4" viewBox="0 0 7 4"><path d="M0 0h7l-3.500 4z" fill="#000"/></svg></div>
<div class="btn" style="left:1370px;top:199px;width:18px;height:55px;border-color:#fff #a0a0a0 #a0a0a0 #fff;box-shadow:none;line-height:45px;font-weight:bold;font-size:13px;letter-spacing:0.400px;text-indent:1px"></div>
<div style="left:1371px;top:218px;width:16px;height:16px;background:linear-gradient(#dfe5ff 0,#6586f7 35%,#6b8bf8 70%,#c5d0ff 100%);border:1px solid #000;color:#fff;font-size:11px;line-height:14px;text-align:center;font-weight:bold">?</div>
<svg class="i" style="left:5px;top:946px" width="1733" height="17" shape-rendering="crispEdges"><defs><pattern id="dp" width="2" height="2" patternUnits="userSpaceOnUse"><rect width="2" height="2" fill="#f0f0f0"/><rect x="0" y="0" width="1" height="1" fill="#fff"/><rect x="1" y="1" width="1" height="1" fill="#fff"/></pattern></defs><rect width="1733" height="17" fill="url(#dp)"/></svg>
<div style="left:5px;top:946px;width:17px;height:17px;background:#f0f0f0"></div>
<div style="left:1721px;top:946px;width:17px;height:17px;background:#f0f0f0"></div>
<svg class="i" style="left:10px;top:949px" width="7" height="11" viewBox="0 0 7 11"><path d="M5.500 1.500l-4 4 4 4" fill="none" stroke="#555" stroke-width="1.800"/></svg>
<svg class="i" style="left:1726px;top:949px" width="7" height="11" viewBox="0 0 7 11"><path d="M1.500 1.500l4 4-4 4" fill="none" stroke="#555" stroke-width="1.800"/></svg>
<div style="left:22px;top:946px;width:753px;height:17px;background:#f0f0f0;border:1px solid;border-color:#fff #696969 #696969 #fff;box-shadow:inset -1px -1px 0 #a0a0a0"></div>
<div style="left:4px;top:963px;width:1736px;height:1px;background:#fff"></div>
<div style="left:92px;top:964px;width:1650px;height:1px;background:#a0a0a0"></div>
<div style="left:92px;top:965px;width:1650px;height:1px;background:#696969"></div>
<div style="left:1741px;top:86px;width:1px;height:880px;background:#8a8a8a"></div>
<div style="left:1px;top:984px;width:91px;height:1px;background:#a0a0a0"></div>
<div style="left:1px;top:985px;width:91px;height:1px;background:#696969"></div>
<div style="left:91px;top:966px;width:1px;height:19px;background:#a0a0a0"></div>
<div style="left:92px;top:965px;width:86px;height:19px;background:#f0f0f0;border:1px solid #696969;box-shadow:inset -1px -1px 0 #a0a0a0,inset 1px 1px 0 #fff;border-radius:0 0 2px 2px"></div>
<span class="t th" style="left:8px;top:981px;letter-spacing:-0.060px">Табличный вид</span>
<span class="t th" style="left:97px;top:979px;letter-spacing:-0.300px">Предпросмотр</span>
<div style="left:1px;top:986px;width:1741px;height:1px;background:#a0a0a0"></div>
<div style="left:1px;top:987px;width:1741px;height:1px;background:#fff"></div>
<div class="btn" style="left:1479px;top:994px;width:82px;height:25px;line-height:22px;">Вставить</div>
<div class="btn" style="left:1567px;top:994px;width:82px;height:25px;line-height:22px;color:#a0a0a0;">Заменить</div>
<div class="btn" style="left:1654px;top:994px;width:81px;height:25px;line-height:22px;">Закрыть</div>
<div style="left:238px;top:217px;width:401px;height:562px;background:#f0f0f0;border:1px solid #a0a0a0"></div>
<div style="left:242px;top:245px;width:393px;height:1px;background:#a0a0a0"></div>
<div style="left:242px;top:246px;width:393px;height:1px;background:#fff"></div>
<div style="left:242px;top:314px;width:393px;height:1px;background:#a0a0a0"></div>
<div style="left:242px;top:315px;width:393px;height:1px;background:#fff"></div>
<div style="left:242px;top:343px;width:393px;height:1px;background:#a0a0a0"></div>
<div style="left:242px;top:344px;width:393px;height:1px;background:#fff"></div>
<div style="left:242px;top:372px;width:393px;height:1px;background:#a0a0a0"></div>
<div style="left:242px;top:373px;width:393px;height:1px;background:#fff"></div>
<div style="left:242px;top:401px;width:393px;height:1px;background:#a0a0a0"></div>
<div style="left:242px;top:402px;width:393px;height:1px;background:#fff"></div>
<div style="left:242px;top:430px;width:393px;height:1px;background:#a0a0a0"></div>
<div style="left:242px;top:431px;width:393px;height:1px;background:#fff"></div>
<div style="left:242px;top:480px;width:393px;height:1px;background:#a0a0a0"></div>
<div style="left:242px;top:481px;width:393px;height:1px;background:#fff"></div>
<div style="left:242px;top:509px;width:393px;height:1px;background:#a0a0a0"></div>
<div style="left:242px;top:510px;width:393px;height:1px;background:#fff"></div>
<div style="left:242px;top:580px;width:393px;height:1px;background:#a0a0a0"></div>
<div style="left:242px;top:581px;width:393px;height:1px;background:#fff"></div>
<div style="left:242px;top:630px;width:393px;height:1px;background:#a0a0a0"></div>
<div style="left:242px;top:631px;width:393px;height:1px;background:#fff"></div>
<div style="left:242px;top:680px;width:393px;height:1px;background:#a0a0a0"></div>
<div style="left:242px;top:681px;width:393px;height:1px;background:#fff"></div>
<div style="left:242px;top:751px;width:393px;height:1px;background:#a0a0a0"></div>
<div style="left:242px;top:752px;width:393px;height:1px;background:#fff"></div>
<div style="left:241px;top:376px;width:395px;height:21px;background:#0078d7"></div>
<svg class="i" style="left:242px;top:222px" width="16" height="16" viewBox="0 0 16 16"><defs><linearGradient id="sg15" x1="0" y1="0" x2="0" y2="1"><stop offset="0" stop-color="#f4f7ff"/><stop offset="0.700" stop-color="#a3b6ea"/><stop offset="1" stop-color="#dfe6fa"/></linearGradient></defs><path d="M1.700 14.500l5.800-6" stroke="#d96a18" stroke-width="2.800" stroke-linecap="round"/><path d="M1.600 14l5.600-5.800" stroke="#f08a3a" stroke-width="0.900" stroke-linecap="round"/><circle cx="9.900" cy="5.700" r="4.400" fill="url(#sg15)" stroke="#eba273" stroke-width="1.300"/></svg>
<span id="t114" class="t u" style="left:263.5px;top:235px;letter-spacing:0.559px;">Поиск</span>
<svg class="i" style="left:244px;top:253px" width="12" height="12" viewBox="0 0 12 12"><path d="M6 1.800v8.400M1.800 6h8.400" stroke="#5b9a17" stroke-width="3.400" stroke-linecap="round"/><path d="M6 2v8M2 6h8" stroke="#6aa822" stroke-width="1.600" stroke-linecap="round"/></svg>
<span id="t115" class="t u" style="left:263.5px;top:264px;letter-spacing:0.158px;">Добавить группу</span>
<svg class="i" style="left:625px;top:253px" width="4" height="7" viewBox="0 0 4 7"><path d="M0 0l4 3.500-4 3.500z" fill="#000"/></svg>
<svg class="i" style="left:244px;top:272px" width="12" height="12" viewBox="0 0 12 12"><path d="M6 1.800v8.400M1.800 6h8.400" stroke="#5b9a17" stroke-width="3.400" stroke-linecap="round"/><path d="M6 2v8M2 6h8" stroke="#6aa822" stroke-width="1.600" stroke-linecap="round"/></svg>
<span id="t116" class="t u" style="left:263.5px;top:283px;letter-spacing:0.087px;">Добавить позицию</span>
<span id="t117" class="t u" style="right:1118.5px;top:283px;">Ins</span>
<svg class="i" style="left:245px;top:294px" width="11" height="11" viewBox="0 0 11 11"><path d="M0.800 0.800l9.400 9.400M10.200 0.800l-9.400 9.400" stroke="#f0532b" stroke-width="1.500" stroke-linecap="round"/></svg>
<span id="t118" class="t u" style="left:263.5px;top:303px;letter-spacing:-0.305px;">Удалить</span>
<span id="t119" class="t u g" style="left:263.5px;top:333px;letter-spacing:-0.128px;">Редактировать значение во всех выделенных позициях</span>
<span id="t120" class="t u g" style="right:1118.5px;top:333px;">Ctrl+F2</span>
<span id="t121" class="t u g" style="left:263.5px;top:362px;letter-spacing:-0.029px;">Выбрать тип строки</span>
<svg class="i" style="left:625px;top:354px" width="4" height="7" viewBox="0 0 4 7"><path d="M0 0l4 3.500-4 3.500z" fill="#000"/></svg>
<span id="t122" class="t u" style="left:263.5px;top:391px;letter-spacing:-0.083px;color:#fff">Выбрать тип работ</span>
<svg class="i" style="left:625px;top:383px" width="4" height="7" viewBox="0 0 4 7"><path d="M0 0l4 3.500-4 3.500z" fill="#fff"/></svg>
<span id="t123" class="t u" style="left:263.5px;top:420px;letter-spacing:0.091px;">Перенумеровать группы</span>
<svg class="i" style="left:242px;top:437px" width="16" height="14" viewBox="0 0 16 14"><path d="M2.500 0.500h7v11h-9v-9z" fill="#e0ffff" stroke="#8aa9a9"/><path d="M0.500 2.500h2v-2" fill="none" stroke="#8aa9a9"/><path d="M8.500 2.500h7v11h-9v-9z" fill="#e0ffff" stroke="#8aa9a9"/><path d="M6.500 4.500h2v-2" fill="none" stroke="#8aa9a9"/><path d="M3 6.500h2.500M3 8.500h2.500M8.500 6.500h5.500M8.500 8.500h5.500M8.500 10.500h5.500" stroke="#7d9e9e"/></svg>
<span id="t124" class="t u" style="left:263.5px;top:449px;letter-spacing:0.127px;">Создать копию группы</span>
<svg class="i" style="left:242px;top:458px" width="16" height="14" viewBox="0 0 16 14"><path d="M2.500 0.500h7v11h-9v-9z" fill="#e0ffff" stroke="#8aa9a9"/><path d="M0.500 2.500h2v-2" fill="none" stroke="#8aa9a9"/><path d="M8.500 2.500h7v11h-9v-9z" fill="#e0ffff" stroke="#8aa9a9"/><path d="M6.500 4.500h2v-2" fill="none" stroke="#8aa9a9"/><path d="M3 6.500h2.500M3 8.500h2.500M8.500 6.500h5.500M8.500 8.500h5.500M8.500 10.500h5.500" stroke="#7d9e9e"/></svg>
<span id="t125" class="t u" style="left:263.5px;top:470px;letter-spacing:0.178px;">Скопировать группы в общий справочник</span>
<svg class="i" style="left:242px;top:486px" width="16" height="16" viewBox="0 0 16 16"><path d="M5.500 0.500h7.500l2.500 2v13h-10z" fill="#e4e8ee" stroke="#9aa6b8"/><path d="M6 2.500h9M6 13.500h9" stroke="#c9d0da"/><rect x="7" y="5" width="7.500" height="6" fill="#f00008"/><path d="M0.500 6.500h1.500v6.500h-1.500zM2 7.500l2.500-1.500h3l0.500 1h3.500v1.500h-4v0.800h2v1.200h-2v0.800h1.500v1.200h-1.500v0.500h-4l-1.500-1z" fill="#fff4c8" stroke="#000" stroke-width="0.900" stroke-linejoin="round"/></svg>
<span id="t126" class="t u" style="left:263.5px;top:499px;letter-spacing:-0.044px;">Использовать этого поставщика для назначения в смету</span>
<svg class="i" style="left:243px;top:516px" width="14" height="15" viewBox="0 0 14 15"><path d="M3.5 0.5h9v14h-12v-11z" fill="#fbfbfb" stroke="#b8b8b8"/><path d="M8 4l-3 4h2.5l-1.5 4 3.5-5h-2.5z" fill="#f07a1a"/></svg>
<span id="t127" class="t u" style="left:263.5px;top:528px;letter-spacing:-0.092px;">Показывать цены в валюте</span>
<svg class="i" style="left:246px;top:538px" width="8" height="13" viewBox="0 0 8 13"><path d="M4 0.8v5.4M1.3 3.5h5.4" stroke="#3f9a1c" stroke-width="2.2" stroke-linecap="round"/><path d="M1.2 10.8h5.6" stroke="#f0532b" stroke-width="2.2" stroke-linecap="round"/></svg>
<span id="t128" class="t u" style="left:263.5px;top:549px;letter-spacing:-0.075px;">Показывать дополнительные затраты</span>
<div style="left:242px;top:556px;width:17px;height:19px;background:#f8f8f8;border:1px solid;border-color:#a0a0a0 #fff #fff #a0a0a0"></div>
<svg class="i" style="left:247px;top:562px" width="8" height="7" viewBox="0 0 8 7"><path d="M0.800 3.200l2.200 2.300 4.200-4.700" fill="none" stroke="#000" stroke-width="1.800"/></svg>
<span id="t129" class="t u" style="left:263.5px;top:570px;letter-spacing:0.071px;">Показывать дополнительную информацию</span>
<span id="t130" class="t u" style="left:263.5px;top:599px;letter-spacing:-0.015px;">Применить индекс ФИ...</span>
<span id="t131" class="t u" style="left:263.5px;top:620px;letter-spacing:-0.184px;">Назначить индексы и ВЦ на раздел ФСБЦ</span>
<svg class="i" style="left:243px;top:637px" width="14" height="14" viewBox="0 0 14 14"><rect x="0.500" y="0.500" width="13" height="13" fill="#fbfefb" stroke="#4a8a3a"/><path d="M1.500 12.500h11" stroke="#dff0df"/><path d="M12 3h-3.300l-6.700 8h3.300z" fill="#1c7d22"/><path d="M2 3h3.300l6.700 8h-3.300z" fill="#4aa84a"/><path d="M2 10.300h4v0.900h-4zM8 3h4v0.900h-4z" fill="#19701c"/></svg>
<span id="t132" class="t u" style="left:263.5px;top:649px;letter-spacing:-0.048px;">Импорт из Excel</span>
<svg class="i" style="left:243px;top:658px" width="14" height="14" viewBox="0 0 14 14"><rect x="0.500" y="0.500" width="13" height="13" fill="#fbfefb" stroke="#4a8a3a"/><path d="M1.500 12.500h11" stroke="#dff0df"/><path d="M12 3h-3.300l-6.700 8h3.300z" fill="#1c7d22"/><path d="M2 3h3.300l6.700 8h-3.300z" fill="#4aa84a"/><path d="M2 10.300h4v0.900h-4zM8 3h4v0.900h-4z" fill="#19701c"/></svg>
<span id="t133" class="t u" style="left:263.5px;top:670px;letter-spacing:-0.213px;">Экспорт в Excel</span>
<svg class="i" style="left:242px;top:686px" width="16" height="15" viewBox="0 0 16 15"><defs><linearGradient id="fg26" x1="0" y1="1" x2="1" y2="0"><stop offset="0" stop-color="#ffee00"/><stop offset="1" stop-color="#ff9800"/></linearGradient></defs><path d="M2.500 2.500h4.500v2h8.500v9h-13z" fill="#fff9b0" stroke="#8f8fa5" stroke-width="0.800"/><rect x="3" y="3" width="3.500" height="2.500" fill="#ffff00"/><path d="M0.500 6.500h13.500v2h0.800v2.500h0.700v3.500h-14v-3h-1z" fill="url(#fg26)" stroke="#7f7f95" stroke-width="0.800"/><rect x="7.800" y="0" width="2.400" height="5" fill="#0a6ae0"/><path d="M5.300 3.500h7.400l-3.700 4.200z" fill="#0a6ae0"/></svg>
<span id="t134" class="t u" style="left:263.5px;top:699px;letter-spacing:0.073px;">Загрузить обосновывающий документ</span>
<svg class="i" style="left:242px;top:707.5px" width="17" height="16" viewBox="0 0 17 16"><defs><linearGradient id="vg27" x1="0" y1="0" x2="0" y2="1"><stop offset="0" stop-color="#7fd3ff"/><stop offset="0.550" stop-color="#86d8ff"/><stop offset="1" stop-color="#e0fbff"/></linearGradient></defs><path d="M4 0.500h8.500v14.500h-11v-12z" fill="url(#vg27)" stroke="#858585"/><path d="M1.500 3.500h3v-3z" fill="#d8ffff" stroke="#858585" stroke-width="0.800"/><rect x="0.600" y="8.600" width="5.400" height="3.400" rx="1" fill="#e8ffff" stroke="#454545" stroke-width="1.200"/><rect x="7.600" y="8.600" width="5.400" height="3.400" rx="1" fill="#e8ffff" stroke="#454545" stroke-width="1.200"/><path d="M6 9.500h1.600M13 9.200l1.400-1.600h1.400v2.400M2 8.200l1.600-1.600 1 1.600" fill="none" stroke="#555" stroke-width="1"/></svg>
<span id="t135" class="t u" style="left:263.5px;top:720px;letter-spacing:0.148px;">Просмотр обосновывающего документа</span>
<span id="t136" class="t u" style="left:263.5px;top:741px;letter-spacing:0.046px;">Письмо заказчика</span>
<svg class="i" style="left:625px;top:732px" width="4" height="7" viewBox="0 0 4 7"><path d="M0 0l4 3.500-4 3.500z" fill="#000"/></svg>
<span id="t137" class="t u" style="left:263.5px;top:770px;letter-spacing:0.004px;">Параметры</span>
<div style="left:632px;top:372px;width:178px;height:50px;background:#f0f0f0;border:3px solid #ff0000"></div>
<div style="left:638px;top:220px;width:1px;height:556px;background:#a0a0a0"></div>
<div style="left:639px;top:372px;width:1px;height:50px;background:#fff"></div>
<div style="left:637px;top:377px;width:18px;height:20px;background:#f8f8f8;border:1px solid;border-color:#a0a0a0 #fff #fff #a0a0a0"></div>
<svg class="i" style="left:642px;top:384px" width="8" height="7" viewBox="0 0 8 7"><path d="M0.800 3.200l2.200 2.300 4.200-4.700" fill="none" stroke="#000" stroke-width="1.800"/></svg>
<span id="t138" class="t u" style="left:658.3px;top:391px;letter-spacing:-0.033px;">Строительный</span>
<span id="t139" class="t u" style="right:949.6px;top:391px;">Ctrl+Q</span>
<span id="t140" class="t u" style="left:658.3px;top:412px;letter-spacing:0.256px;">Монтажный</span>
<span id="t141" class="t u" style="right:949.6px;top:412px;">Ctrl+W</span>
<div style="left:0px;top:0px;width:1744px;height:1px;background:#6b6b6b"></div>
<div style="left:0px;top:0px;width:1px;height:1027px;background:#7a7a7a"></div>
<div style="left:0px;top:1026px;width:1744px;height:1px;background:#6b6b6b"></div>
<div style="left:1742px;top:0px;width:2px;height:1027px;background:#7a7a7a"></div>
</body></html>
